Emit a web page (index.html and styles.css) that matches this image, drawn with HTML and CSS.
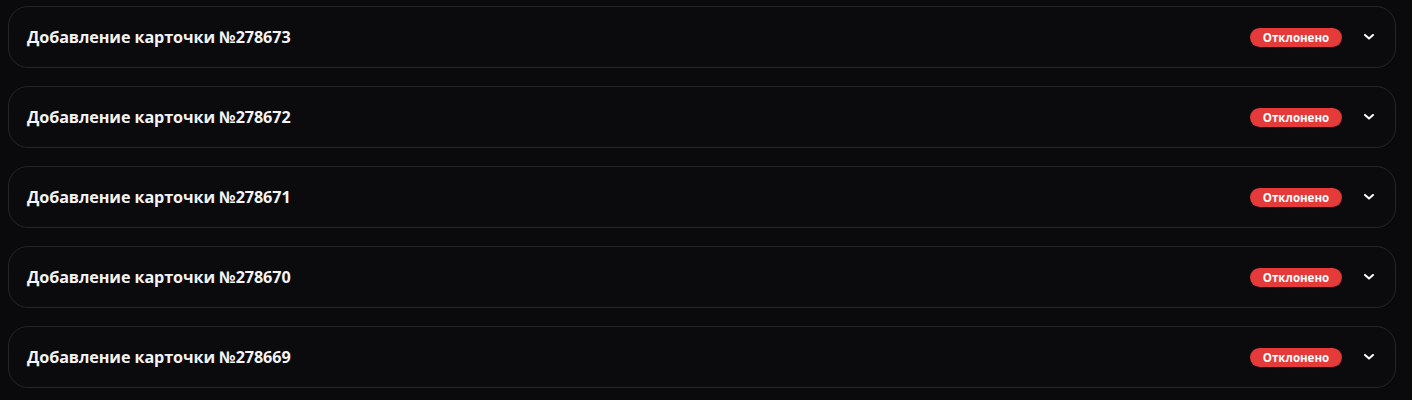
FILE: index.html
```html
<!DOCTYPE html>
<html lang="ru">
<head>
<meta charset="utf-8">
<title>Заявки</title>
<link rel="stylesheet" href="styles.css">
</head>
<body>
<div class="list">
  <div class="item">
    <span class="title">Добавление карточки №278673</span>
    <span class="status rejected">Отклонено</span>
    <svg class="chev" viewBox="0 0 10 6" width="10" height="6"><path d="M1 1l4 3.6L9 1" fill="none" stroke="#fff" stroke-width="2" stroke-linecap="round" stroke-linejoin="round"/></svg>
  </div>
  <div class="item">
    <span class="title">Добавление карточки №278672</span>
    <span class="status rejected">Отклонено</span>
    <svg class="chev" viewBox="0 0 10 6" width="10" height="6"><path d="M1 1l4 3.6L9 1" fill="none" stroke="#fff" stroke-width="2" stroke-linecap="round" stroke-linejoin="round"/></svg>
  </div>
  <div class="item">
    <span class="title">Добавление карточки №278671</span>
    <span class="status rejected">Отклонено</span>
    <svg class="chev" viewBox="0 0 10 6" width="10" height="6"><path d="M1 1l4 3.6L9 1" fill="none" stroke="#fff" stroke-width="2" stroke-linecap="round" stroke-linejoin="round"/></svg>
  </div>
  <div class="item">
    <span class="title">Добавление карточки №278670</span>
    <span class="status rejected">Отклонено</span>
    <svg class="chev" viewBox="0 0 10 6" width="10" height="6"><path d="M1 1l4 3.6L9 1" fill="none" stroke="#fff" stroke-width="2" stroke-linecap="round" stroke-linejoin="round"/></svg>
  </div>
  <div class="item">
    <span class="title">Добавление карточки №278669</span>
    <span class="status rejected">Отклонено</span>
    <svg class="chev" viewBox="0 0 10 6" width="10" height="6"><path d="M1 1l4 3.6L9 1" fill="none" stroke="#fff" stroke-width="2" stroke-linecap="round" stroke-linejoin="round"/></svg>
  </div>
</div>
</body>
</html>
```
FILE: styles.css
```css
html, body {
  margin: 0;
  background: #0a0a0c;
}

body {
  padding: 6px 16px 0 8px;
  font-family: "Open Sans", "Noto Sans", sans-serif;
  color: #fff;
}

.list {
  display: flex;
  flex-direction: column;
  gap: 18px;
}

.item {
  display: flex;
  align-items: center;
  height: 62px;
  box-sizing: border-box;
  padding: 0 21px 0 18px;
  border: 1px solid #262629;
  border-radius: 20px;
  background: #0b0b0d;
}

.title {
  flex: 1;
  font-size: 16.2px;
  font-weight: 700;
  color: #f4f4f4;
  letter-spacing: -0.1px;
}

.status {
  display: inline-flex;
  align-items: center;
  justify-content: center;
  width: 92px;
  height: 19px;
  border-radius: 10px;
  font-size: 11.5px;
  font-weight: 700;
  color: #fff;
}

.status.rejected {
  background: #e53a3a;
}

.chev {
  margin-left: 22px;
  display: block;
}
```
